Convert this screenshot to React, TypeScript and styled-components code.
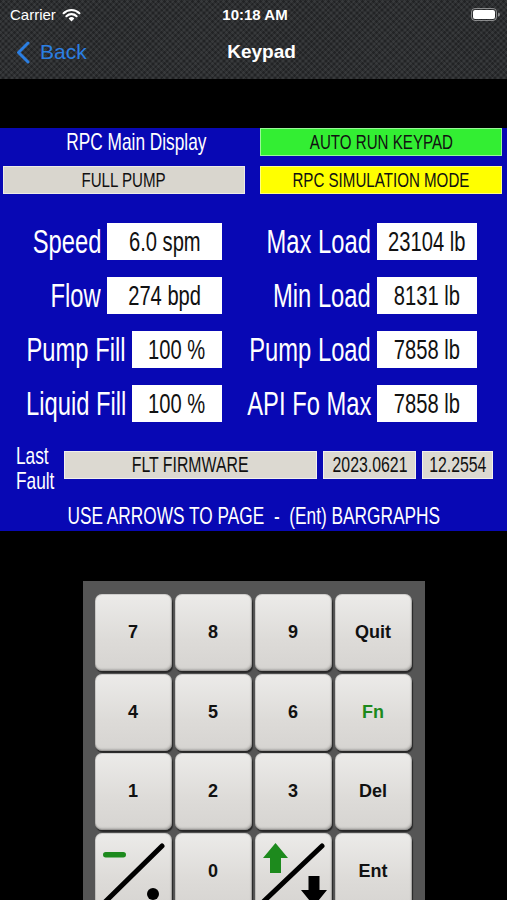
import styled, { createGlobalStyle } from 'styled-components';

const GlobalStyle = createGlobalStyle`
  html, body {
    margin: 0;
    padding: 0;
    background: #000;
  }
  * { box-sizing: border-box; }
`;

const sans = `"Liberation Sans", Arial, sans-serif`;

const Screen = styled.div`
  width: 507px;
  height: 900px;
  overflow: hidden;
  background: #000;
  display: flex;
  flex-direction: column;
  & > * { flex-shrink: 0; }
`;

/* carbon fibre header */
const TopBar = styled.header`
  height: 79px;
  display: flex;
  flex-direction: column;
  background-color: #2d2f31;
  background-image:
    repeating-linear-gradient(45deg, rgba(255,255,255,0.05) 0 2px, transparent 2px 4px),
    repeating-linear-gradient(-45deg, rgba(0,0,0,0.25) 0 2px, transparent 2px 4px);
  font-family: ${sans};
  color: #fff;
`;

const StatusBar = styled.div`
  height: 29px;
  display: grid;
  grid-template-columns: 1fr auto 1fr;
  align-items: center;
  padding: 0 7px 0 10px;
  font-size: 15px;
`;

const StatusLeft = styled.div`
  display: flex;
  align-items: center;
  gap: 6px;
`;

const Clock = styled.div`
  font-weight: 700;
  font-size: 15px;
`;

const StatusRight = styled.div`
  display: flex;
  justify-content: flex-end;
`;

const NavBar = styled.div`
  height: 50px;
  display: grid;
  grid-template-columns: 1fr auto 1fr;
  align-items: center;
  padding: 0 0 4px 16px;
`;

const BackLink = styled.div`
  display: flex;
  align-items: center;
  gap: 10px;
  color: #2b7fe3;
  font-size: 21px;
`;

const Title = styled.div`
  font-weight: 700;
  font-size: 19px;
`;

const Gap = styled.div<{ $h: number }>`
  height: ${({ $h }) => $h}px;
`;

// the panel font is a condensed Helvetica; squeeze Liberation Sans to match
const Cond = styled.span<{ $origin?: string }>`
  display: inline-block;
  white-space: pre;
  transform: scaleX(0.72);
  transform-origin: ${({ $origin }) => $origin || 'center'};
`;

const Display = styled.section`
  height: 403px;
  background: #0808b4;
  font-family: ${sans};
  color: #fff;
  display: flex;
  flex-direction: column;
`;

const Header = styled.div`
  display: grid;
  grid-template-columns: 242px 242px;
  grid-auto-rows: 28px;
  column-gap: 15px;
  row-gap: 10px;
  padding-left: 3px;
`;

const HeaderTitle = styled.div`
  display: flex;
  align-items: center;
  justify-content: center;
  padding-left: 24px;
  font-size: 24px;
`;

const Badge = styled.div<{ $bg: string }>`
  display: flex;
  align-items: center;
  justify-content: center;
  background: ${({ $bg }) => $bg};
  color: #111;
  font-size: 21px;
  border: 1px solid rgba(255,255,255,0.5);
`;

const Readings = styled.div`
  margin-top: 29px;
  display: grid;
  grid-template-columns: 222px 255px;
  grid-auto-rows: 37px;
  row-gap: 17px;
`;

const Reading = styled.div`
  display: flex;
  justify-content: flex-end;
  align-items: center;
  gap: 6px;
`;

const Label = styled.div`
  display: flex;
  justify-content: flex-end;
  font-size: 33px;
  min-width: 0;
`;

const Value = styled.div<{ $w: number }>`
  flex-shrink: 0;
  width: ${({ $w }) => $w}px;
  height: 37px;
  background: #fff;
  color: #111;
  display: flex;
  align-items: center;
  justify-content: center;
  font-size: 28px;
`;

const FaultRow = styled.div`
  margin-top: 23px;
  display: flex;
  align-items: center;
  padding-left: 16px;
  height: 46px;
`;

const FaultLabel = styled.div`
  width: 48px;
  display: flex;
  flex-direction: column;
  font-size: 24px;
  line-height: 25px;
`;

const FaultBoxes = styled.div`
  display: flex;
  gap: 6px;
  margin-top: -7px;
`;

const FaultBox = styled.div<{ $w: number }>`
  width: ${({ $w }) => $w}px;
  height: 28px;
  background: #dcd9d1;
  color: #111;
  display: flex;
  align-items: center;
  justify-content: center;
  font-size: 22px;
  border: 1px solid rgba(255,255,255,0.6);
`;

const Hint = styled.div`
  margin-top: 11px;
  display: flex;
  justify-content: center;
  font-size: 24px;
`;

const Pad = styled.div`
  width: 342px;
  height: 340px;
  margin: 0 auto;
  background: #555555;
  padding: 13px 13px 0 12px;
  display: grid;
  grid-template-columns: repeat(4, 77px);
  grid-auto-rows: 77px;
  gap: 2.5px 3px;
`;

const Key = styled.div<{ $green?: boolean }>`
  border-radius: 7px;
  background: linear-gradient(#ecebe9, #dddbd8 60%, #d6d4d1);
  box-shadow:
    inset 0 0 0 1px rgba(0,0,0,0.12),
    inset -1px -2px 2px rgba(0,0,0,0.18),
    1px 2px 1px rgba(0,0,0,0.55);
  display: flex;
  align-items: center;
  justify-content: center;
  font-family: ${sans};
  font-weight: 700;
  font-size: 18px;
  color: ${({ $green }) => ($green ? '#1d8a1d' : '#111')};
`;

const KeyArt = styled.svg`
  width: 77px;
  height: 77px;
  display: block;
`;

const Wifi = () => (
  <svg width="19" height="14" viewBox="0 0 19 14">
    <path d="M9.5 13.5 L6.6 10.4 A4.2 4.2 0 0 1 12.4 10.4 Z" fill="#fff" />
    <path d="M4.4 8.2 A7.3 7.3 0 0 1 14.6 8.2" stroke="#fff" strokeWidth="2.2" fill="none" strokeLinecap="round" />
    <path d="M1.6 5.2 A11.3 11.3 0 0 1 17.4 5.2" stroke="#fff" strokeWidth="2.2" fill="none" strokeLinecap="round" />
  </svg>
);

const Battery = () => (
  <svg width="29" height="13" viewBox="0 0 29 13">
    <rect x="0.5" y="0.5" width="25" height="12" rx="3.5" fill="none" stroke="rgba(255,255,255,0.45)" />
    <rect x="2" y="2" width="22" height="9" rx="2" fill="#fff" />
    <path d="M27 4.5 a1.6 1.6 0 0 1 0 4 Z" fill="rgba(255,255,255,0.45)" />
  </svg>
);

const Chevron = () => (
  <svg width="14" height="23" viewBox="0 0 14 23">
    <path d="M12 2 L2.5 11.5 L12 21" stroke="#2b7fe3" strokeWidth="3" fill="none" strokeLinecap="round" strokeLinejoin="round" />
  </svg>
);

const readings = [
  { label: 'Speed', value: '6.0 spm', w: 115 },
  { label: 'Max Load', value: '23104 lb', w: 100 },
  { label: 'Flow', value: '274 bpd', w: 115 },
  { label: 'Min Load', value: '8131 lb', w: 100 },
  { label: 'Pump Fill', value: '100 %', w: 90 },
  { label: 'Pump Load', value: '7858 lb', w: 100 },
  { label: 'Liquid Fill', value: '100 %', w: 90 },
  { label: 'API Fo Max', value: '7858 lb', w: 100 },
];

const keys = ['7', '8', '9', 'Quit', '4', '5', '6', 'Fn', '1', '2', '3', 'Del'];

export default function App() {
  return (
    <Screen>
      <GlobalStyle />
      <TopBar>
        <StatusBar>
          <StatusLeft>
            Carrier <Wifi />
          </StatusLeft>
          <Clock>10:18 AM</Clock>
          <StatusRight>
            <Battery />
          </StatusRight>
        </StatusBar>
        <NavBar>
          <BackLink>
            <Chevron />
            Back
          </BackLink>
          <Title>Keypad</Title>
          <div />
        </NavBar>
      </TopBar>

      <Gap $h={49} />

      <Display>
        <Header>
          <HeaderTitle><Cond>RPC Main Display</Cond></HeaderTitle>
          <Badge $bg="#33ee33"><Cond>AUTO RUN KEYPAD</Cond></Badge>
          <Badge $bg="#d9d6ce"><Cond>FULL PUMP</Cond></Badge>
          <Badge $bg="#ffff00"><Cond>RPC SIMULATION MODE</Cond></Badge>
        </Header>

        <Readings>
          {readings.map((r) => (
            <Reading key={r.label}>
              <Label><Cond $origin="right">{r.label}</Cond></Label>
              <Value $w={r.w}><Cond>{r.value}</Cond></Value>
            </Reading>
          ))}
        </Readings>

        <FaultRow>
          <FaultLabel>
            <Cond $origin="left">Last</Cond>
            <Cond $origin="left">Fault</Cond>
          </FaultLabel>
          <FaultBoxes>
            <FaultBox $w={253}><Cond>FLT FIRMWARE</Cond></FaultBox>
            <FaultBox $w={93}><Cond>2023.0621</Cond></FaultBox>
            <FaultBox $w={71}><Cond>12.2554</Cond></FaultBox>
          </FaultBoxes>
        </FaultRow>

        <Hint><Cond>USE ARROWS TO PAGE  -  (Ent) BARGRAPHS</Cond></Hint>
      </Display>

      <Gap $h={50} />

      <Pad>
        {keys.map((k) => (
          <Key key={k} $green={k === 'Fn'}>
            {k}
          </Key>
        ))}
        <Key>
          <KeyArt viewBox="0 0 77 77">
            <rect x="8" y="19" width="23" height="5.5" rx="2.75" fill="#1d8a1d" />
            <line x1="10" y1="69" x2="67" y2="13" stroke="#000" strokeWidth="5" strokeLinecap="round" />
            <circle cx="58" cy="61" r="6" fill="#000" />
          </KeyArt>
        </Key>
        <Key>0</Key>
        <Key>
          <KeyArt viewBox="0 0 77 77">
            <path d="M20.5 10 L33 25 L26 25 L26 40 L15 40 L15 25 L8 25 Z" fill="#1d8a1d" />
            <line x1="9" y1="68" x2="67" y2="13" stroke="#000" strokeWidth="5" strokeLinecap="round" />
            <path d="M53.5 43 L64.5 43 L64.5 57 L72 57 L59 73 L46 57 L53.5 57 Z" fill="#000" />
          </KeyArt>
        </Key>
        <Key>Ent</Key>
      </Pad>
    </Screen>
  );
}
